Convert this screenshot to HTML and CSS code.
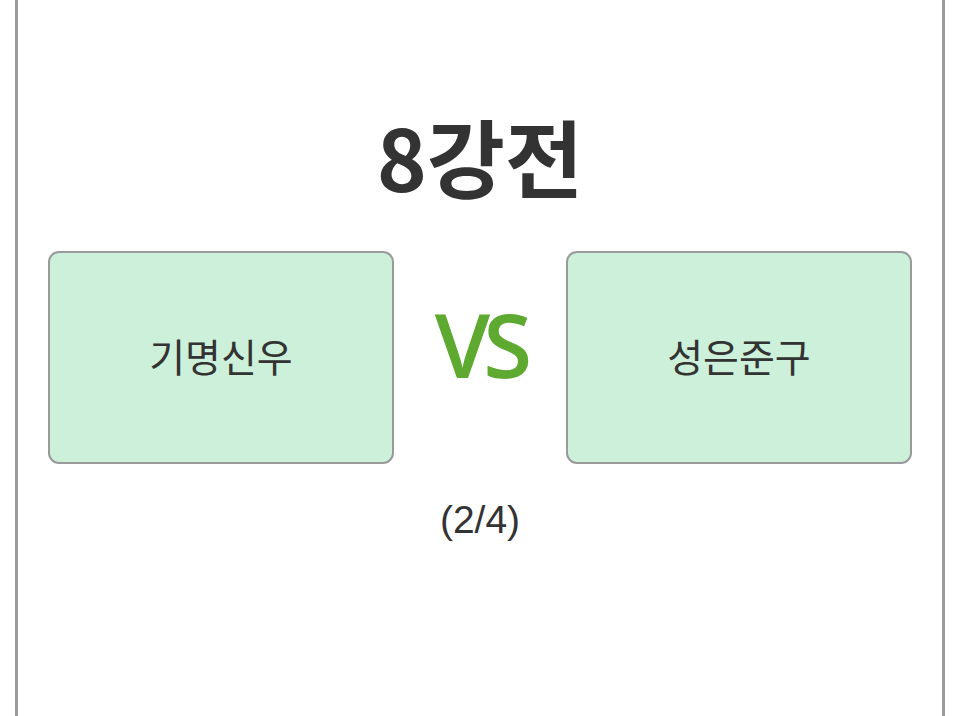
FILE: index.html
```html
<!DOCTYPE html>
<html lang="ko">
<head>
<meta charset="utf-8">
<link rel="stylesheet" href="styles.css">
</head>
<body>
<div class="frame">
  <h1 class="title">8강전</h1>
  <div class="match">
    <div class="card">기명신우</div>
    <div class="vs">VS</div>
    <div class="card">성은준구</div>
  </div>
  <div class="progress">(2/4)</div>
</div>
</body>
</html>
```
FILE: styles.css
```css
html, body {
  margin: 0;
  padding: 0;
  background: #ffffff;
}
body {
  padding: 0 15px;
}
.frame {
  height: 716px;
  box-sizing: border-box;
  border-left: 3px solid #9b9b9f;
  border-right: 3px solid #9b9b9f;
  padding: 100px 30px 0;
  display: flex;
  flex-direction: column;
  align-items: stretch;
  font-family: "Noto Sans CJK KR", "Noto Sans", sans-serif;
}
.title {
  margin: 0;
  text-align: center;
  font-size: 85px;
  line-height: 110px;
  font-weight: 700;
  color: #333333;
}
.match {
  margin-top: 41px;
  display: flex;
  align-items: center;
  justify-content: space-between;
}
.card {
  width: 346px;
  height: 213px;
  box-sizing: border-box;
  border: 2px solid #9a9a9d;
  border-radius: 11px;
  background: #ccf0d9;
  display: flex;
  align-items: center;
  justify-content: center;
  font-size: 39px;
  color: #333333;
  padding-bottom: 6px;
}
.vs {
  font-family: "Open Sans", sans-serif;
  font-weight: 600;
  font-size: 89px;
  letter-spacing: -7px;
  color: #5ea92f;
  line-height: 1;
  padding-bottom: 28px;
}
.progress {
  margin-top: 34px;
  text-align: center;
  font-family: "Liberation Sans", Arial, sans-serif;
  font-size: 39px;
  color: #333333;
}
```
